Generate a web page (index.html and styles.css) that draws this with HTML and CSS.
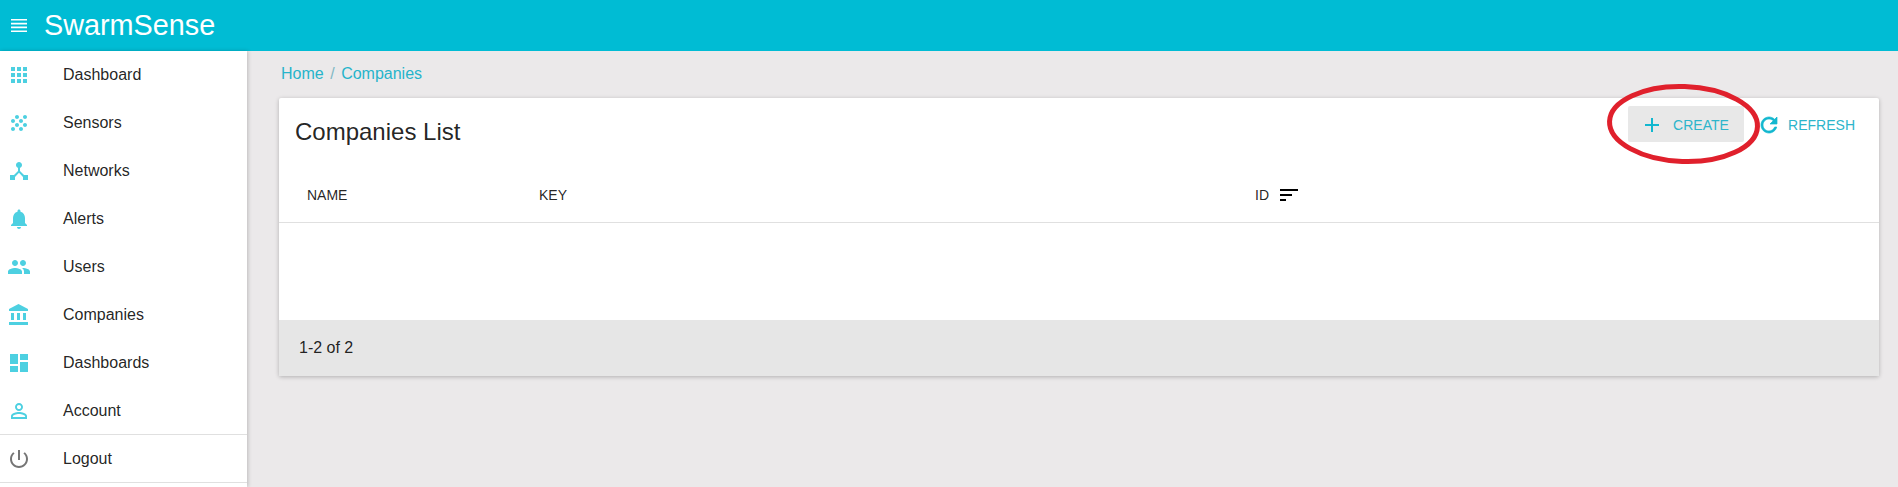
FILE: index.html
```html
<!DOCTYPE html>
<html lang="en">
<head>
    <meta charset="UTF-8">
    <title>SwarmSense - Companies</title>
    <link rel="stylesheet" href="styles.css">
</head>
<body>
    <div class="header">
        <svg class="menu-icon" viewBox="0 0 16 13"><path d="M0 0h16v1.600H0zM0 3.800h16v1.600H0zM0 7.600h16v1.600H0zM0 11.400h16V13H0z"/></svg>
        <div class="brand">SwarmSense</div>
    </div>
    <div class="layout">
        <div class="sidebar">
            <div class="nav-item">
                <svg class="icon" viewBox="0 0 24 24"><path d="M4 8h4V4H4v4zm6 12h4v-4h-4v4zm-6 0h4v-4H4v4zm0-6h4v-4H4v4zm6 0h4v-4h-4v4zm6-10v4h4V4h-4zm-6 4h4V4h-4v4zm6 6h4v-4h-4v4zm0 6h4v-4h-4v4z"/></svg>
                <span>Dashboard</span>
            </div>
            <div class="nav-item">
                <svg class="icon" viewBox="0 0 24 24"><path d="M10 12c-1.100 0-2 .9-2 2s.9 2 2 2 2-.9 2-2-.9-2-2-2zM6 8c-1.100 0-2 .9-2 2s.9 2 2 2 2-.9 2-2-.9-2-2-2zm0 8c-1.100 0-2 .9-2 2s.9 2 2 2 2-.9 2-2-.9-2-2-2zm12-8c1.100 0 2-.9 2-2s-.9-2-2-2-2 .9-2 2 .9 2 2 2zm-4 8c-1.100 0-2 .9-2 2s.9 2 2 2 2-.9 2-2-.9-2-2-2zm4-4c-1.100 0-2 .9-2 2s.9 2 2 2 2-.9 2-2-.9-2-2-2zm-4-4c-1.100 0-2 .9-2 2s.9 2 2 2 2-.9 2-2-.9-2-2-2zm-4-4c-1.100 0-2 .9-2 2s.9 2 2 2 2-.9 2-2-.9-2-2-2z"/></svg>
                <span>Sensors</span>
            </div>
            <div class="nav-item">
                <svg class="icon" viewBox="0 0 24 24"><path d="M17 16l-4-4V8.820C14.160 8.400 15 7.300 15 6c0-1.660-1.340-3-3-3S9 4.340 9 6c0 1.300.84 2.400 2 2.820V12l-4 4H3v5h5v-3.050l4-4.200 4 4.200V21h5v-5h-4z"/></svg>
                <span>Networks</span>
            </div>
            <div class="nav-item">
                <svg class="icon" viewBox="0 0 24 24"><path d="M12 22c1.100 0 2-.9 2-2h-4c0 1.100.89 2 2 2zm6-6v-5c0-3.070-1.640-5.640-4.500-6.320V4c0-.83-.67-1.500-1.500-1.500s-1.500.67-1.500 1.500v.68C7.630 5.360 6 7.920 6 11v5l-2 2v1h16v-1l-2-2z"/></svg>
                <span>Alerts</span>
            </div>
            <div class="nav-item">
                <svg class="icon" viewBox="0 0 24 24"><path d="M16 11c1.660 0 2.990-1.340 2.990-3S17.660 5 16 5c-1.660 0-3 1.340-3 3s1.340 3 3 3zm-8 0c1.660 0 2.990-1.340 2.990-3S9.660 5 8 5C6.340 5 5 6.340 5 8s1.340 3 3 3zm0 2c-2.330 0-7 1.170-7 3.500V19h14v-2.500c0-2.330-4.670-3.500-7-3.500zm8 0c-.29 0-.62.02-.97.05 1.160.84 1.970 1.970 1.970 3.450V19h6v-2.500c0-2.330-4.670-3.500-7-3.500z"/></svg>
                <span>Users</span>
            </div>
            <div class="nav-item">
                <svg class="icon" viewBox="0 0 24 24"><path d="M4 10v7h3v-7H4zm6 0v7h3v-7h-3zM2 22h19v-3H2v3zm14-12v7h3v-7h-3zm-4.500-9L2 6v2h19V6l-9.500-5z"/></svg>
                <span>Companies</span>
            </div>
            <div class="nav-item">
                <svg class="icon" viewBox="0 0 24 24"><path d="M3 13h8V3H3v10zm0 8h8v-6H3v6zm10 0h8V11h-8v10zm0-18v6h8V3h-8z"/></svg>
                <span>Dashboards</span>
            </div>
            <div class="nav-item">
                <svg class="icon" viewBox="0 0 24 24"><path d="M12 5.900c1.160 0 2.100.94 2.100 2.100s-.94 2.100-2.100 2.100S9.900 9.160 9.900 8s.94-2.100 2.100-2.100m0 9c2.970 0 6.100 1.460 6.100 2.100v1.100H5.900V17c0-.64 3.130-2.100 6.100-2.100M12 4C9.790 4 8 5.790 8 8s1.790 4 4 4 4-1.790 4-4-1.790-4-4-4zm0 9c-2.670 0-8 1.340-8 4v3h16v-3c0-2.660-5.330-4-8-4z"/></svg>
                <span>Account</span>
            </div>
            <div class="nav-item logout">
                <svg class="icon" viewBox="0 0 24 24"><path d="M13 3h-2v10h2V3zm4.830 2.170l-1.420 1.420C17.990 7.860 19 9.810 19 12c0 3.870-3.130 7-7 7s-7-3.130-7-7c0-2.190 1.010-4.140 2.580-5.420L6.170 5.170C4.230 6.820 3 9.260 3 12c0 4.970 4.030 9 9 9s9-4.030 9-9c0-2.740-1.230-5.180-3.170-6.830z"/></svg>
                <span>Logout</span>
            </div>
        </div>
        <div class="content">
            <div class="breadcrumb">
                <span>Home</span>
                <span class="sep">/</span>
                <span>Companies</span>
            </div>
            <div class="card">
                <div class="card-header">
                    <div class="card-title">Companies List</div>
                    <div class="actions">
                        <button class="btn btn-create">
                            <svg class="btn-icon" viewBox="0 0 24 24"><path d="M19 13h-6v6h-2v-6H5v-2h6V5h2v6h6v2z"/></svg>
                            CREATE
                        </button>
                        <button class="btn btn-refresh">
                            <svg class="btn-icon" viewBox="0 0 24 24"><path d="M17.650 6.350C16.200 4.900 14.210 4 12 4c-4.420 0-7.990 3.580-7.990 8s3.570 8 7.990 8c3.730 0 6.840-2.550 7.730-6h-2.080c-.82 2.330-3.040 4-5.650 4-3.310 0-6-2.690-6-6s2.690-6 6-6c1.660 0 3.140.69 4.220 1.780L13 11h7V4l-2.350 2.350z"/></svg>
                            REFRESH
                        </button>
                    </div>
                </div>
                <div class="table-head">
                    <div class="col-name">NAME</div>
                    <div class="col-key">KEY</div>
                    <div class="col-id">
                        ID
                        <svg class="sort-icon" viewBox="0 0 24 24"><path d="M3 18h6v-2H3v2zM3 6v2h18V6H3zm0 7h12v-2H3v2z"/></svg>
                    </div>
                </div>
                <div class="table-body"></div>
                <div class="card-footer">1-2 of 2</div>
            </div>
        </div>
    </div>
    <svg class="annotation" viewBox="0 0 160 86"><ellipse cx="81.500" cy="43" rx="74" ry="37.500" transform="rotate(2 81.500 43)"/></svg>
</body>
</html>
```

FILE: styles.css
```css
html, body {
    height: 487px;
    overflow: hidden;
}
body {
    font-family: "Liberation Sans", Arial, sans-serif;
    margin: 0;
    background: #ebe9ea;
    color: rgba(0,0,0,0.87);
    position: relative;
}
.header {
    height: 51px;
    background: #00bcd4;
    color: white;
    display: flex;
    align-items: center;
    padding-left: 11px;
}
.menu-icon {
    width: 16px;
    height: 13px;
    fill: white;
    margin-right: 17px;
}
.brand {
    font-size: 28.8px;
}
.layout {
    display: flex;
    height: 436px;
}
.sidebar {
    width: 247px;
    flex-shrink: 0;
    background: white;
    box-shadow: 1px 0 4px rgba(0,0,0,0.2);
}
.nav-item {
    height: 48px;
    display: flex;
    align-items: center;
    padding-left: 7px;
    font-size: 16px;
    gap: 32px;
}
.icon {
    width: 24px;
    height: 24px;
    fill: #4dd0e1;
}
.logout {
    margin-top: -1px;
    border-top: 1px solid #e0e0e0;
    border-bottom: 1px solid #e0e0e0;
    height: 47px;
}
.logout .icon {
    fill: #757575;
}
.content {
    flex: 1;
    padding: 0 19px 0 32px;
}
.breadcrumb {
    height: 45px;
    padding: 0 0 2px 2px;
    display: flex;
    align-items: center;
    gap: 6.5px;
    font-size: 16px;
    color: #26b4ca;
}
.sep {
    color: #7fb8c4;
}
.card {
    background: white;
    border-radius: 2px;
    box-shadow: 0 1px 4px rgba(0,0,0,0.25);
}
.card-header {
    height: 77px;
    display: flex;
    justify-content: space-between;
    padding: 8px 13px 0 16px;
    box-sizing: border-box;
}
.card-title {
    font-size: 24px;
    line-height: 52px;
}
.actions {
    display: flex;
    align-items: flex-start;
}
.btn {
    height: 36px;
    border: none;
    background: none;
    font-family: inherit;
    font-size: 14px;
    color: #2db5cb;
    display: flex;
    align-items: center;
    border-radius: 2px;
    padding-top: 2px;
}
.btn-create {
    background: #e8e8e8;
    width: 116px;
    gap: 9px;
    padding-left: 12px;
    padding-right: 14px;
}
.btn-refresh {
    gap: 7px;
    padding-left: 13px;
    padding-right: 11px;
}
.btn-icon {
    width: 24px;
    height: 24px;
    fill: #12b7cf;
}
.btn-refresh .btn-icon {
    stroke: #12b7cf;
    stroke-width: 0.7;
}
.table-head {
    height: 40px;
    padding: 0 0 7px 28px;
    display: grid;
    grid-template-columns: 232px 716px 1fr;
    align-items: center;
    font-size: 14px;
    border-bottom: 1px solid #e0e0e0;
}
.col-id {
    display: flex;
    align-items: center;
    gap: 8px;
}
.sort-icon {
    width: 24px;
    height: 24px;
}
.table-body {
    height: 97px;
}
.card-footer {
    height: 56px;
    background: #e6e6e6;
    display: flex;
    align-items: center;
    padding-left: 20px;
    font-size: 16px;
}
.annotation {
    position: absolute;
    left: 1602px;
    top: 81px;
    width: 160px;
    height: 86px;
    fill: none;
    stroke: #e0202c;
    stroke-width: 5;
}
```
